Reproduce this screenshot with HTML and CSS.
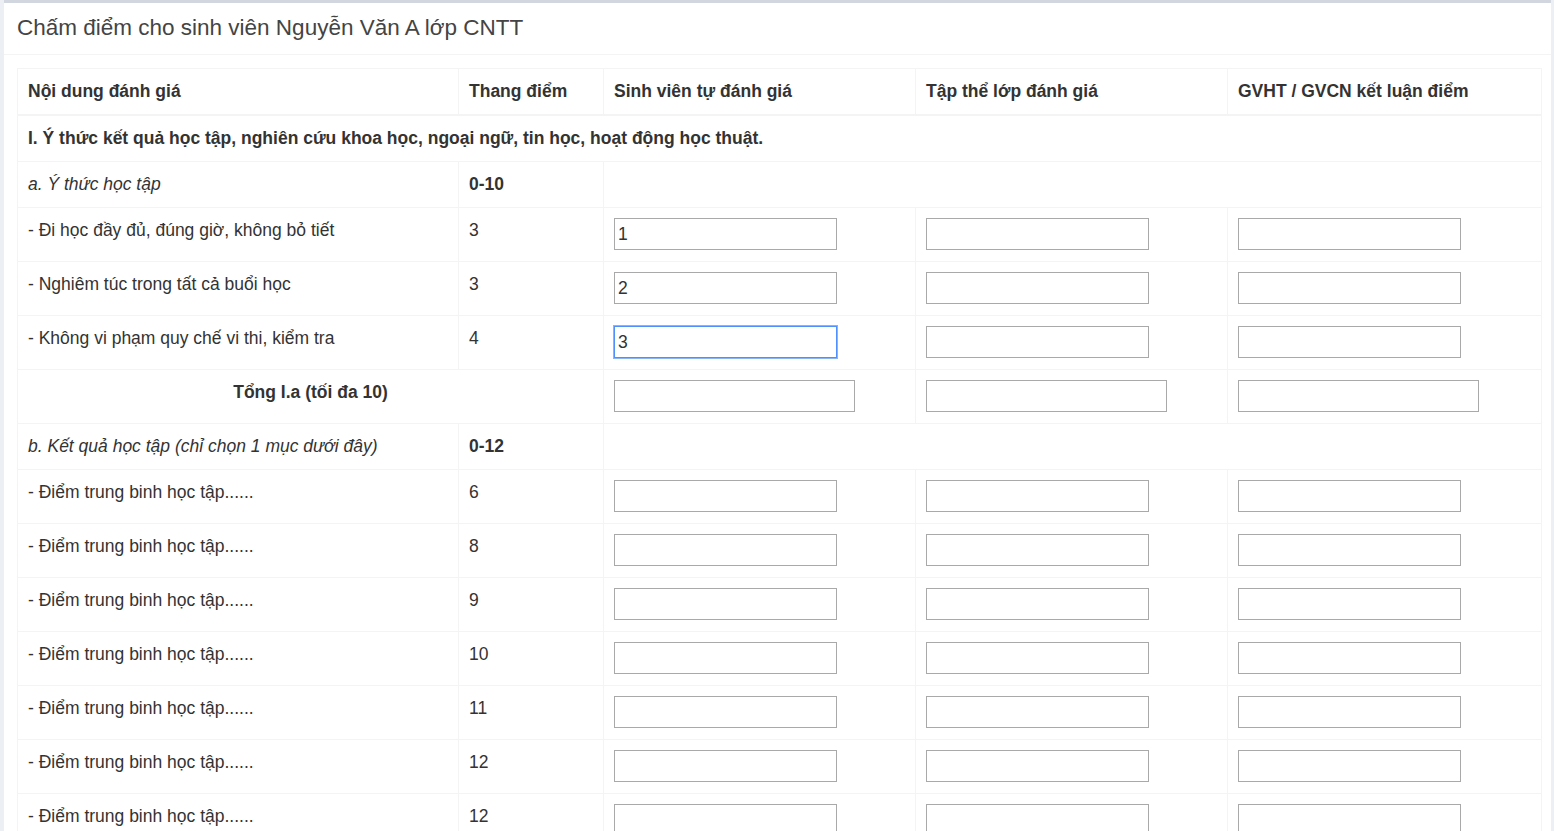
FILE: index.html
```html
<!DOCTYPE html>
<html lang="vi">
<head>
<meta charset="utf-8">
<title>Chấm điểm</title>
<link rel="stylesheet" href="styles.css">
</head>
<body>
<div class="box">
  <div class="box-header">
    <h3 class="box-title">Chấm điểm cho sinh viên Nguyễn Văn A lớp CNTT</h3>
  </div>
  <div class="box-body">
    <table class="grade">
      <colgroup>
        <col class="c1"><col class="c2"><col class="c3"><col class="c4"><col class="c5">
      </colgroup>
      <thead>
        <tr>
          <th>Nội dung đánh giá</th>
          <th>Thang điểm</th>
          <th>Sinh viên tự đánh giá</th>
          <th>Tập thể lớp đánh giá</th>
          <th>GVHT / GVCN kết luận điểm</th>
        </tr>
      </thead>
      <tbody>
        <tr><td colspan="5" class="bold">I. Ý thức kết quả học tập, nghiên cứu khoa học, ngoại ngữ, tin học, hoạt động học thuật.</td></tr>
        <tr><td class="ital">a. Ý thức học tập</td><td class="bold">0-10</td><td colspan="3"></td></tr>
        <tr><td>- Đi học đầy đủ, đúng giờ, không bỏ tiết</td><td>3</td><td><input class="inp" value="1"></td><td><input class="inp"></td><td><input class="inp"></td></tr>
        <tr><td>- Nghiêm túc trong tất cả buổi học</td><td>3</td><td><input class="inp" value="2"></td><td><input class="inp"></td><td><input class="inp"></td></tr>
        <tr><td>- Không vi phạm quy chế vi thi, kiểm tra</td><td>4</td><td><input class="inp focused" value="3" autofocus></td><td><input class="inp"></td><td><input class="inp"></td></tr>
        <tr><td colspan="2" class="bold center">Tổng I.a (tối đa 10)</td><td><input class="inp wide"></td><td><input class="inp wide"></td><td><input class="inp wide"></td></tr>
        <tr><td class="ital">b. Kết quả học tập (chỉ chọn 1 mục dưới đây)</td><td class="bold">0-12</td><td colspan="3"></td></tr>
        <tr><td>- Điểm trung binh học tập......</td><td>6</td><td><input class="inp"></td><td><input class="inp"></td><td><input class="inp"></td></tr>
        <tr><td>- Điểm trung binh học tập......</td><td>8</td><td><input class="inp"></td><td><input class="inp"></td><td><input class="inp"></td></tr>
        <tr><td>- Điểm trung binh học tập......</td><td>9</td><td><input class="inp"></td><td><input class="inp"></td><td><input class="inp"></td></tr>
        <tr><td>- Điểm trung binh học tập......</td><td>10</td><td><input class="inp"></td><td><input class="inp"></td><td><input class="inp"></td></tr>
        <tr><td>- Điểm trung binh học tập......</td><td>11</td><td><input class="inp"></td><td><input class="inp"></td><td><input class="inp"></td></tr>
        <tr><td>- Điểm trung binh học tập......</td><td>12</td><td><input class="inp"></td><td><input class="inp"></td><td><input class="inp"></td></tr>
        <tr><td>- Điểm trung binh học tập......</td><td>12</td><td><input class="inp"></td><td><input class="inp"></td><td><input class="inp"></td></tr>
      </tbody>
    </table>
  </div>
</div>
</body>
</html>
```
FILE: styles.css
```css
html, body {
  margin: 0;
  padding: 0;
}
body {
  background: #ecf0f5;
  font-family: "Liberation Sans", Arial, sans-serif;
  color: #333;
  font-size: 17.5px;
  overflow: hidden;
}
.box {
  margin: 0 3px 0 4px;
  background: #fff;
  border-top: 3px solid #d2d6de;
}
.box-header {
  height: 51px;
  border-bottom: 1px solid #f4f4f4;
  padding: 0 13px;
  display: flex;
  align-items: center;
}
.box-title {
  margin: 0;
  font-size: 22.5px;
  font-weight: normal;
  color: #444;
  position: relative;
  top: -1px;
}
.box-body {
  padding: 13px 10px 0 13px;
}
.grade {
  width: 1524px;
  border-collapse: collapse;
  table-layout: fixed;
  border: 1px solid #f4f4f4;
}
.c1 { width: 441px; }
.c2 { width: 145px; }
.c3 { width: 312px; }
.c4 { width: 312px; }
.c5 { width: 314px; }
.grade th, .grade td {
  border: 1px solid #f4f4f4;
  padding: 10px;
  line-height: 25px;
  text-align: left;
  vertical-align: top;
  white-space: nowrap;
}
.grade th {
  font-weight: bold;
  border-bottom-width: 2px;
}
.bold { font-weight: bold; }
.ital { font-style: italic; }
.center { text-align: center !important; }
.inp {
  display: block;
  box-sizing: border-box;
  width: 223px;
  height: 32px;
  margin: 0 0 1px;
  padding: 1px 3px 0;
  border: 1px solid #a9a9a9;
  font-family: "Liberation Sans", Arial, sans-serif;
  font-size: 17.5px;
  color: #333;
  background: #fff;
  outline: none;
}
.inp.wide { width: 241px; }
.inp.focused {
  border: 1px solid #4d90fe;
  box-shadow: 0 0 0 1px #8ab4f8;
}
```
